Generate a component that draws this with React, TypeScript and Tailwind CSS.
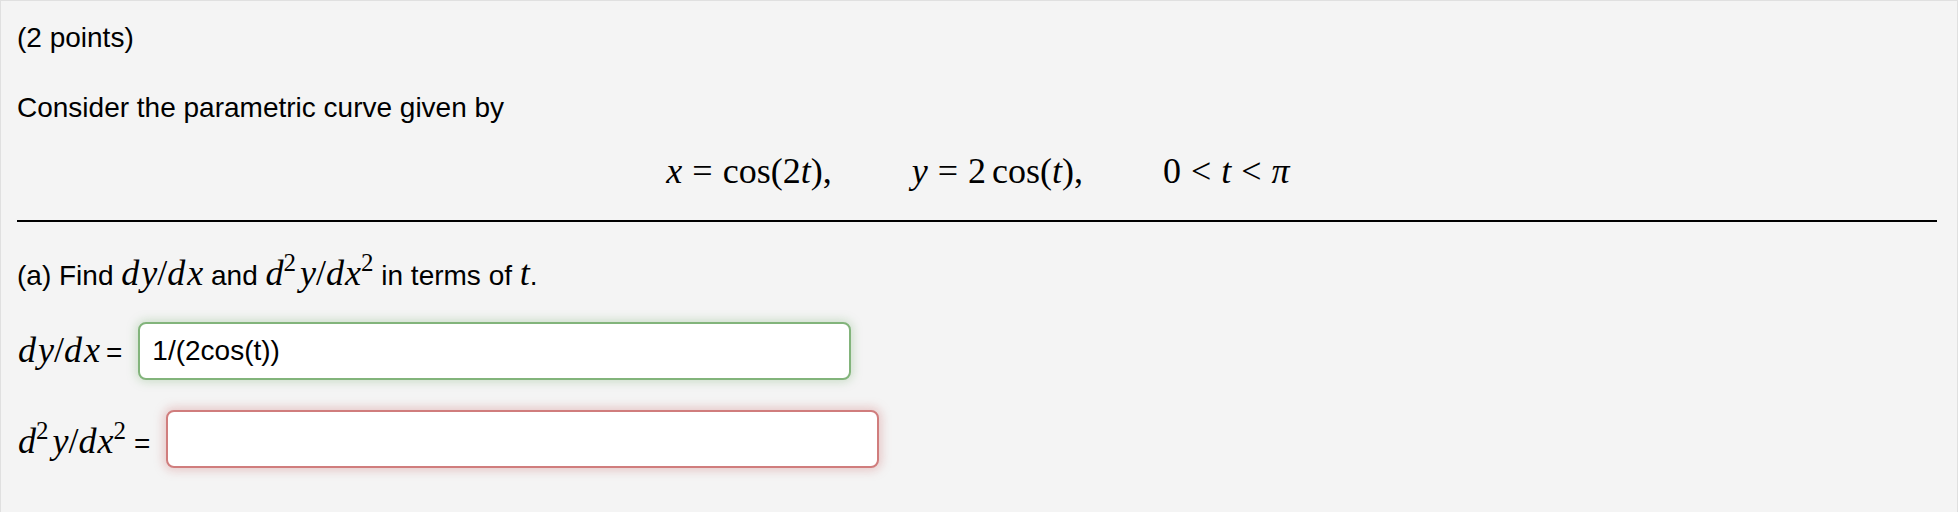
import React from 'react';

const serif = { fontFamily: '"Liberation Serif", "Times New Roman", serif' };

// italic math variable
const V: React.FC<{ children: React.ReactNode }> = ({ children }) => (
  <span className="italic">{children}</span>
);

const Sup: React.FC<{ children: React.ReactNode }> = ({ children }) => (
  <span className="text-[25px] align-[0.55em] leading-none">{children}</span>
);

const DyDx: React.FC = () => (
  <span className="font-['Liberation_Serif',serif] text-[36px] leading-none whitespace-nowrap">
    <V>d</V>
    <span className="ml-[2px]" />
    <V>y</V>/<V>d</V>
    <span className="ml-[2px]" />
    <V>x</V>
  </span>
);

const D2yDx2: React.FC = () => (
  <span className="font-['Liberation_Serif',serif] text-[36px] leading-none whitespace-nowrap">
    <V>d</V>
    <Sup>2</Sup>
    <span className="ml-[4px]" />
    <V>y</V>/<V>d</V>
    <span className="ml-[1px]" />
    <V>x</V>
    <Sup>2</Sup>
  </span>
);

const AnswerRow: React.FC<{
  label: React.ReactNode;
  value: string;
  status: 'correct' | 'incorrect';
  eqGap: string;
}> = ({ label, value, status, eqGap }) => (
  <div className="flex items-center gap-[16px]">
    <div className="flex items-baseline whitespace-nowrap pl-[1px]">
      {label}
      <span className={eqGap}>=</span>
    </div>
    <input
      readOnly
      value={value}
      className={`w-[713px] h-[58px] rounded-[8px] border-2 bg-white px-[12px] text-[28px] text-black outline-none font-['Liberation_Sans',Arial,sans-serif] ${
        status === 'correct'
          ? 'border-[#82b47b] shadow-[0_0_10px_2px_rgba(130,180,123,0.35)]'
          : 'border-[#d07d7d] shadow-[0_0_10px_3px_rgba(208,125,125,0.35)]'
      }`}
    />
  </div>
);

export default function App() {
  return (
    <div className="min-h-[512px] w-full bg-[#f4f4f4] border border-[#e0e0e0] border-b-0 pl-[16px] pr-[20px] pt-[21px] text-black text-[28px] leading-[32px] font-['Liberation_Sans',Arial,sans-serif]">
      <p>(2 points)</p>

      <p className="mt-[38px]">Consider the parametric curve given by</p>

      {/* display equation */}
      <div
        className="mt-[27px] h-[40px] flex items-center justify-center gap-[80px] text-[36px] leading-[40px] pl-[2px]"
        style={serif}
      >
        <span className="whitespace-nowrap">
          <V>x</V>
          <span className="mx-[10px]">=</span>
          cos(2<V>t</V>),
        </span>
        <span className="whitespace-nowrap">
          <V>y</V>
          <span className="mx-[10px]">=</span>
          2<span className="ml-[6px]">cos(</span>
          <V>t</V>),
        </span>
        <span className="whitespace-nowrap">
          0<span className="mx-[10px]">&lt;</span>
          <V>t</V>
          <span className="mx-[10px]">&lt;</span>
          <V>π</V>
        </span>
      </div>

      <div className="mt-[29px] h-[2px] bg-black" />

      <p className="mt-[28px] whitespace-nowrap">
        (a) Find <DyDx /> and <D2yDx2 /> in terms of{' '}
        <span className="font-['Liberation_Serif',serif] text-[36px] leading-none italic">t</span>.
      </p>

      <div className="mt-[30px]">
        <AnswerRow label={<DyDx />} value="1/(2cos(t))" status="correct" eqGap="ml-[6px]" />
      </div>

      <div className="mt-[30px]">
        <AnswerRow label={<D2yDx2 />} value="" status="incorrect" eqGap="ml-[8px]" />
      </div>
    </div>
  );
}
